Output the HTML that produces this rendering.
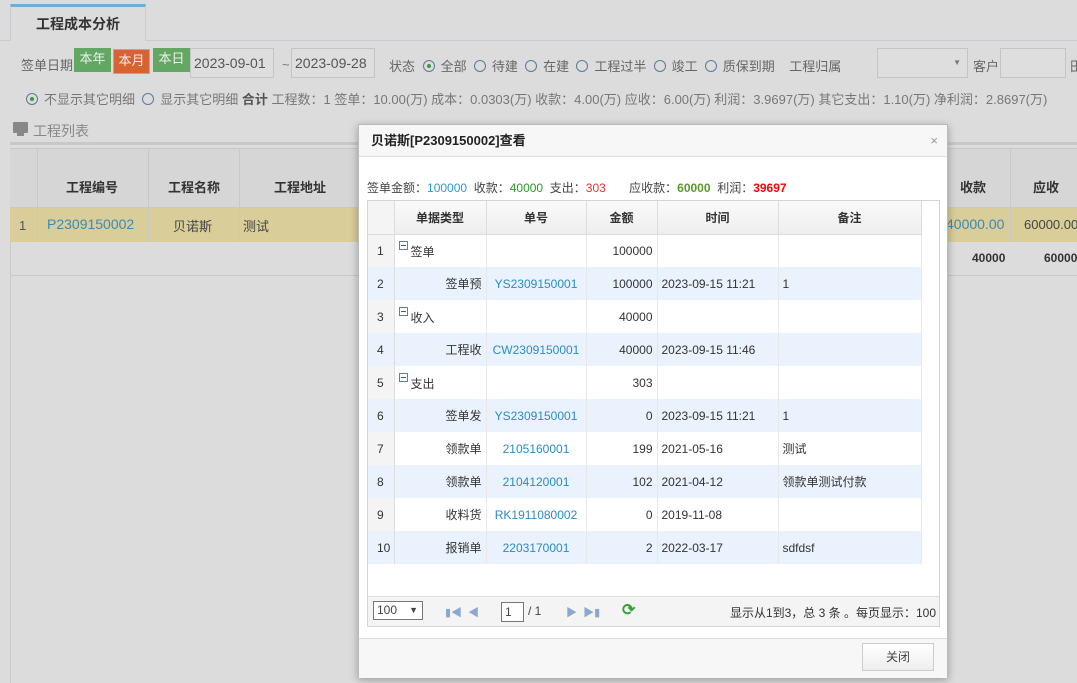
<!DOCTYPE html>
<html><head><meta charset="utf-8"><style>
*{box-sizing:border-box;margin:0;padding:0}
body{width:1077px;height:683px;overflow:hidden;background:#dcdcdc;font-family:"Liberation Sans","Noto Sans CJK SC",sans-serif;font-size:13px;color:#444;position:relative}
.abs{position:absolute;white-space:nowrap}
.btn{position:absolute;top:48px;height:24px;line-height:22px;color:#eee;font-size:13px;text-align:center;width:37px}
.inp{position:absolute;top:48px;height:30px;border:1px solid #c4c4c4;background:#dedede;font-size:14px;line-height:28px;padding-left:3px;color:#555}
.rad{display:inline-block;width:12px;height:12px;border:1px solid #5a7a9a;border-radius:50%;vertical-align:-1px;margin-right:6px;position:relative}
.rad.on::after{content:"";position:absolute;left:3px;top:3px;width:4px;height:4px;border-radius:50%;background:#3a9a3a}
table{border-collapse:collapse}
.dlg{position:absolute;left:358px;top:124px;width:590px;height:554px;background:#fff;border:1px solid #bbb;box-shadow:0 2px 8px rgba(0,0,0,.3)}
.g td{height:33px;border-right:1px solid #e8e8e8;font-size:12px;color:#333;padding:0 4px}
.g tr.alt td{background:#eaf2fd}
.g td.n{background:#f4f4f4;border-right:1px solid #ddd;text-align:left;padding-left:9px}
.g a{color:#2a8bc6}
.ex{display:inline-block;width:9px;height:9px;border:1px solid #5a7fa8;position:relative;vertical-align:6px;margin-right:3px}
.ex::after{content:"";position:absolute;left:1px;right:1px;top:3px;height:1px;background:#3a5f8a}
</style></head><body>
<!-- tab -->
<div class="abs" style="left:0;top:40px;width:1077px;height:1px;background:#c7cdd2"></div>
<div class="abs" style="left:10px;top:4px;width:136px;height:37px;border:1px solid #c7cdd2;border-bottom:none;border-top:3px solid #6ab0d6;background:#dcdcdc;font-weight:bold;font-size:14px;color:#333;text-align:center;line-height:34px">工程成本分析</div>
<!-- filters -->
<div class="abs" style="left:21px;top:55px;font-size:13px;color:#666">签单日期</div>
<div class="btn" style="left:74px;top:48px;background:#62a862">本年</div>
<div class="btn" style="left:113px;top:49px;height:25px;background:#d9632e;border:1px solid #aaa">本月</div>
<div class="btn" style="left:153px;background:#62a862">本日</div>
<div class="inp" style="left:190px;width:84px">2023-09-01</div>
<div class="abs" style="left:282px;top:57px;color:#777">~</div>
<div class="inp" style="left:291px;width:84px">2023-09-28</div>
<div class="abs" style="left:389px;top:56px;color:#666">状态 <span style="margin-left:4px"></span><span class="rad on"></span>全部 &nbsp;<span class="rad"></span>待建 &nbsp;<span class="rad"></span>在建 &nbsp;<span class="rad"></span>工程过半 &nbsp;<span class="rad"></span>竣工 &nbsp;<span class="rad"></span>质保到期 &nbsp; &nbsp;工程归属</div>
<div class="inp" style="left:877px;width:91px;background:#dedede"><span style="position:absolute;right:6px;top:0;font-size:8px;color:#777">▼</span></div>
<div class="abs" style="left:973px;top:56px;color:#666">客户</div>
<div class="inp" style="left:1000px;width:66px"></div>
<div class="abs" style="left:1070px;top:56px;color:#666">田</div>
<div class="abs" style="left:26px;top:89px;color:#777"><span class="rad on"></span>不显示其它明细 &nbsp;<span class="rad"></span>显示其它明细 <b style="color:#555">合计</b> 工程数：1 签单：10.00(万) 成本：0.0303(万) 收款：4.00(万) 应收：6.00(万) 利润：3.9697(万) 其它支出：1.10(万) 净利润：2.8697(万)</div>
<!-- list -->
<div class="abs" style="left:13px;top:122px;width:15px;height:11px;background:#888;border-radius:1px"></div>
<div class="abs" style="left:17px;top:133px;width:7px;height:3px;background:#888"></div>
<div class="abs" style="left:33px;top:121px;color:#888;font-size:14px">工程列表</div>
<div class="abs" style="left:10px;top:142px;width:1067px;height:3px;background:#c8c8c8"></div>
<div class="abs" style="left:10px;top:148px;width:1067px;height:535px;border-left:1px solid #c8c8c8;background:#dcdcdc"></div>
<div class="abs" style="left:10px;top:148px;width:1067px;height:60px;background:#d6d6d6;border-top:1px solid #c8c8c8;border-bottom:1px solid #c8c8c8"></div>
<div class="abs" style="left:10px;top:208px;width:1067px;height:34px;background:#d9cd99"></div>
<div class="abs" style="left:10px;top:242px;width:1067px;height:34px;border-bottom:1px solid #c8c8c8"></div>
<div class="abs" style="left:37px;top:148px;width:1px;height:94px;background:#c8c8c8"></div>
<div class="abs" style="left:148px;top:148px;width:1px;height:94px;background:#c8c8c8"></div>
<div class="abs" style="left:239px;top:148px;width:1px;height:94px;background:#c8c8c8"></div>
<div class="abs" style="left:1010px;top:148px;width:1px;height:94px;background:#c8c8c8"></div>
<div class="abs" style="left:66px;top:177px;font-weight:bold;color:#333">工程编号</div>
<div class="abs" style="left:168px;top:177px;font-weight:bold;color:#333">工程名称</div>
<div class="abs" style="left:274px;top:177px;font-weight:bold;color:#333">工程地址</div>
<div class="abs" style="left:960px;top:177px;font-weight:bold;color:#333">收款</div>
<div class="abs" style="left:1033px;top:177px;font-weight:bold;color:#333">应收</div>
<div class="abs" style="left:19px;top:218px;color:#555">1</div>
<div class="abs" style="left:47px;top:216px;color:#3a8ab8;font-size:14px">P2309150002</div>
<div class="abs" style="left:173px;top:216px;color:#444">贝诺斯</div>
<div class="abs" style="left:243px;top:216px;color:#444">测试</div>
<div class="abs" style="left:946px;top:216px;color:#3a8ab8;font-size:14px">40000.00</div>
<div class="abs" style="left:1024px;top:217px;color:#444">60000.00</div>
<div class="abs" style="left:972px;top:251px;font-weight:bold;color:#333;font-size:12px">40000</div>
<div class="abs" style="left:1044px;top:251px;font-weight:bold;color:#333;font-size:12px">60000</div>
<!-- dialog -->
<div class="dlg">
 <div style="height:32px;border-bottom:1px solid #ddd;background:#f7f7f7;font-weight:bold;color:#222;font-size:13px;line-height:31px;padding-left:12px">贝诺斯[P2309150002]查看<span style="position:absolute;right:9px;top:0;color:#999;font-weight:normal">×</span></div>
 <div class="abs" style="left:8px;top:54px;font-size:12px;color:#444">签单金额：<span style="color:#2a9ad6">100000</span>&nbsp; 收款：<span style="color:#2a9a2a">40000</span>&nbsp; 支出：<span style="color:#f03030">303</span> &nbsp; &nbsp; &nbsp; 应收款：<b style="color:#5a9a2a">60000</b>&nbsp; 利润：<b style="color:#f00">39697</b></div>
 <div class="abs" style="left:8px;top:75px;width:573px;height:427px;border:1px solid #d4d4d4">
  <table class="g" style="width:553px;table-layout:fixed">
   <colgroup><col style="width:26px"><col style="width:92px"><col style="width:100px"><col style="width:71px"><col style="width:121px"><col style="width:143px"></colgroup>
   <tr style="background:linear-gradient(#fafafa,#eee)"><td class="n" style="height:31px;border-bottom:1px solid #ddd"></td><td style="height:31px;text-align:center;font-weight:bold;border-right:1px solid #ddd;border-bottom:1px solid #ddd">单据类型</td><td style="text-align:center;font-weight:bold;border-right:1px solid #ddd;border-bottom:1px solid #ddd">单号</td><td style="text-align:center;font-weight:bold;border-right:1px solid #ddd;border-bottom:1px solid #ddd">金额</td><td style="text-align:center;font-weight:bold;border-right:1px solid #ddd;border-bottom:1px solid #ddd">时间</td><td style="text-align:center;font-weight:bold;border-right:1px solid #ddd;border-bottom:1px solid #ddd">备注</td></tr>
   <tr><td class="n">1</td><td><span class="ex"></span>签单</td><td></td><td style="text-align:right">100000</td><td></td><td></td></tr>
   <tr class="alt"><td class="n">2</td><td style="text-align:right">签单预</td><td style="text-align:center"><a>YS2309150001</a></td><td style="text-align:right">100000</td><td>2023-09-15 11:21</td><td>1</td></tr>
   <tr><td class="n">3</td><td><span class="ex"></span>收入</td><td></td><td style="text-align:right">40000</td><td></td><td></td></tr>
   <tr class="alt"><td class="n">4</td><td style="text-align:right">工程收</td><td style="text-align:center"><a>CW2309150001</a></td><td style="text-align:right">40000</td><td>2023-09-15 11:46</td><td></td></tr>
   <tr><td class="n">5</td><td><span class="ex"></span>支出</td><td></td><td style="text-align:right">303</td><td></td><td></td></tr>
   <tr class="alt"><td class="n">6</td><td style="text-align:right">签单发</td><td style="text-align:center"><a>YS2309150001</a></td><td style="text-align:right">0</td><td>2023-09-15 11:21</td><td>1</td></tr>
   <tr><td class="n">7</td><td style="text-align:right">领款单</td><td style="text-align:center"><a>2105160001</a></td><td style="text-align:right">199</td><td>2021-05-16</td><td>测试</td></tr>
   <tr class="alt"><td class="n">8</td><td style="text-align:right">领款单</td><td style="text-align:center"><a>2104120001</a></td><td style="text-align:right">102</td><td>2021-04-12</td><td>领款单测试付款</td></tr>
   <tr><td class="n">9</td><td style="text-align:right">收料货</td><td style="text-align:center"><a>RK1911080002</a></td><td style="text-align:right">0</td><td>2019-11-08</td><td></td></tr>
   <tr class="alt"><td class="n">10</td><td style="text-align:right">报销单</td><td style="text-align:center"><a>2203170001</a></td><td style="text-align:right">2</td><td>2022-03-17</td><td>sdfdsf</td></tr>
  </table>
  <div class="abs" style="left:0;top:395px;width:571px;height:30px;border-top:1px solid #ddd;background:#f4f4f4;font-size:12px">
   <div class="abs" style="left:5px;top:4px;width:50px;height:19px;border:1px solid #777;background:#fff;line-height:17px;padding-left:3px">100 <span style="position:absolute;right:4px;font-size:9px">▼</span></div>
   <div class="abs" style="left:77px;top:7px;color:#8aa8d0;font-size:11px">▮◀ &nbsp;◀</div>
   <div class="abs" style="left:133px;top:5px;width:23px;height:20px;border:1px solid #777;background:#fff;padding-left:3px;line-height:18px">1</div>
   <div class="abs" style="left:160px;top:7px">/ 1</div>
   <div class="abs" style="left:198px;top:7px;color:#8aa8d0;font-size:11px">▶ &nbsp;▶▮</div>
   <div class="abs" style="left:254px;top:3px;color:#3aa03a;font-size:16px;font-weight:bold">⟳</div>
   <div class="abs" style="right:3px;top:7px;color:#333">显示从1到3，总 3 条 。每页显示：100</div>
  </div>
 </div>
 <div class="abs" style="left:0;top:513px;width:588px;height:40px;border-top:1px solid #ddd;background:#f7f7f7"></div>
 <div class="abs" style="left:503px;top:518px;width:72px;height:28px;border:1px solid #ccc;background:linear-gradient(#fff,#eee);text-align:center;line-height:26px;font-size:12px;color:#444">关闭</div>
</div>
</body></html>
